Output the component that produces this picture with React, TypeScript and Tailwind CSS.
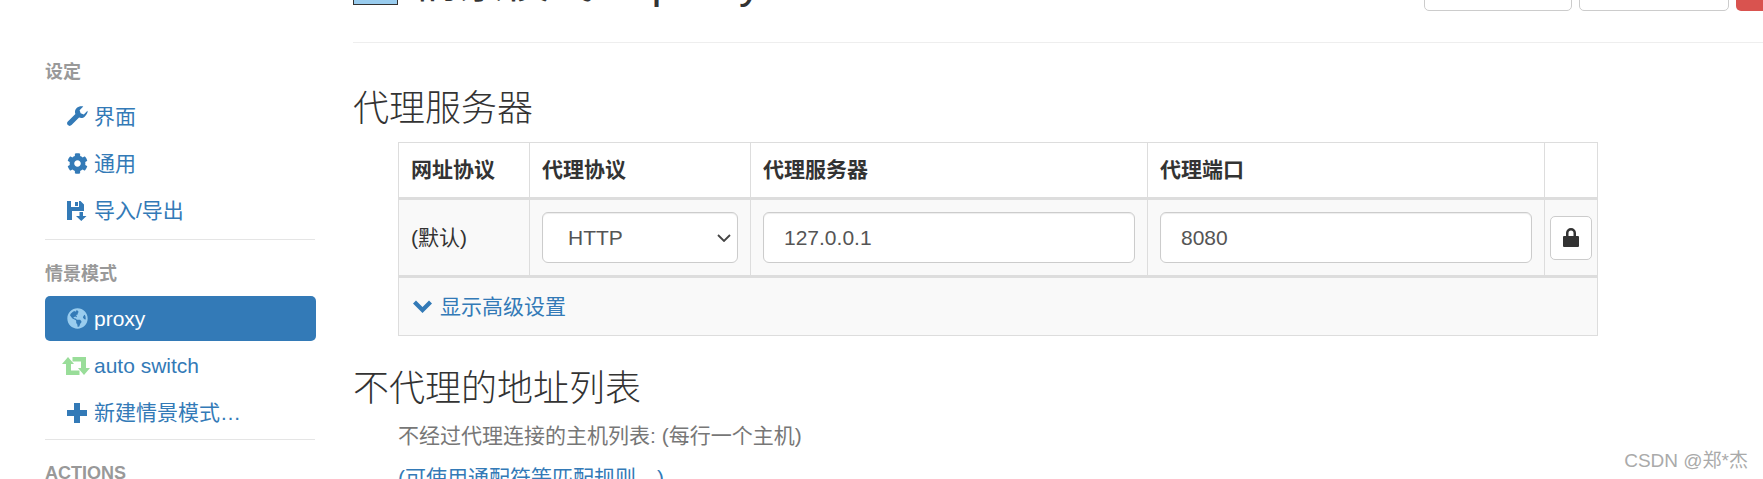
import { FaCog, FaGlobeAmericas } from "react-icons/fa";

const font = "font-['Liberation_Sans','Noto_Sans_CJK_SC',sans-serif]";

function Floppy() {
  return (
    <svg viewBox="0 0 20 20" className="w-[20px] h-[20px] fill-[#337ab7]">
      <path d="M0 0h4v6h8V0h1.500L17 3.500V10H5v9H0zM8 1h3v4H8z" fillRule="evenodd" />
      <path d="M12.500 11h3.500v4h3.500L14.250 20 9 15h3.500z" />
    </svg>
  );
}

function Wrench() {
  return (
    <svg viewBox="0 0 20 20" className="w-[21px] h-[21px] fill-[#337ab7]">
      <path d="M19.500 4.500L16 8l-3-1-1-3 3.500-3.500C13.500 0 10.800.4 9.200 2 7.600 3.600 7.200 5.800 8 7.500L.8 14.700c-1 1-1 2.500 0 3.500s2.500 1 3.500 0L11.500 11c1.700.8 4 .5 5.500-1 1.600-1.500 3-3.500 2.500-5.500z" />
    </svg>
  );
}

function Retweet() {
  return (
    <svg viewBox="0 0 28 20" className="w-[28px] h-[20px] fill-[#99dd99]">
      <path d="M6 1l6 7H9v6.500h8.500V19H4V8H0z" />
      <path d="M22 19l-6-7h3V5.500h-8.500V1H24v11h4z" />
    </svg>
  );
}

function Plus() {
  return (
    <svg viewBox="0 0 20 20" className="w-[20px] h-[20px] fill-[#337ab7]">
      <path d="M7 0h6v7h7v6h-7v7H7v-7H0V7h7z" />
    </svg>
  );
}

function Chevron() {
  return (
    <svg viewBox="0 0 19 13" className="w-[19px] h-[13px] mr-[8px] fill-[#337ab7]">
      <path d="M0 3.500L3 .5l6.500 6.500L16 .5l3 3L9.500 13z" />
    </svg>
  );
}

function Lock() {
  return (
    <svg viewBox="0 0 16 19" className="w-[16px] h-[19px] fill-[#333]">
      <path d="M3 8V5a5 5 0 0 1 10 0v3h2a1 1 0 0 1 1 1v9a1 1 0 0 1-1 1H1a1 1 0 0 1-1-1V9a1 1 0 0 1 1-1zm2.500 0h5V5a2.500 2.500 0 0 0-5 0z" fillRule="evenodd" />
    </svg>
  );
}

function NavItem({ icon, label, active }: { icon: React.ReactNode; label: string; active?: boolean }) {
  return (
    <div className={`h-[45px] mb-[2px] rounded-[5px] flex items-center pl-[22px] text-[21px] ${active ? "bg-[#337ab7] text-white" : "text-[#337ab7]"}`}>
      <span className="w-[27px] h-[24px] flex items-center">{icon}</span>
      <span>{label}</span>
    </div>
  );
}

const labelCls = "text-[18px] font-bold text-[#999] leading-[24px]";
const dividerCls = "h-px bg-[#e5e5e5] w-[270px]";
const cell = "border border-[#ddd] border-b-[3px] px-[12px]";
const inputCls = "w-full h-[51px] bg-white border border-[#ccc] rounded-[6px] flex items-center text-[21px] text-[#555] shadow-[inset_0_1px_1px_rgba(0,0,0,0.075)]";

export default function App() {
  return (
    <div className={`relative w-[1763px] h-[479px] overflow-hidden bg-white flex text-[#333] ${font}`}>
      <aside className="w-[353px] shrink-0 pl-[45px] pt-[60px]">
        <div className="w-[271px]">
          <div className={`${labelCls} mb-[10px]`}>设定</div>
          <NavItem icon={<Wrench />} label="界面" />
          <NavItem icon={<FaCog className="w-[21px] h-[21px] text-[#337ab7]" />} label="通用" />
          <NavItem icon={<Floppy />} label="导入/导出" />
          <div className={`${dividerCls} mt-[6px] mb-[22px]`} />
          <div className={`${labelCls} mb-[10px]`}>情景模式</div>
          <NavItem active icon={<FaGlobeAmericas className="w-[21px] h-[21px] text-[#99ccee]" />} label="proxy" />
          <NavItem icon={<span className="-ml-[5px]"><Retweet /></span>} label="auto switch" />
          <NavItem icon={<Plus />} label="新建情景模式…" />
          <div className={`${dividerCls} mt-[4px] mb-[21px]`} />
          <div className={labelCls}>ACTIONS</div>
        </div>
      </aside>
      <main className="flex-1 min-w-0 -mt-[34px]">
        <div className="h-[77px] border-b border-[#eee] flex justify-between items-start">
          <div className="flex items-start h-[39px]">
            <span className="w-[45px] h-[39px] bg-[#99ccee] border border-[#333] mr-[16px]" />
            <span className="text-[45px] leading-[34px] whitespace-nowrap">情景模式： proxy</span>
          </div>
          <div className="flex gap-[7px] items-start">
            <div className="w-[148px] h-[45px] bg-white border border-[#ccc] rounded-[5px]" />
            <div className="w-[150px] h-[45px] bg-white border border-[#ccc] rounded-[5px]" />
            <div className="w-[27px] h-[45px] bg-[#d9534f] rounded-l-[5px]" />
          </div>
        </div>
        <h3 className="text-[36px] leading-[40px] mt-[46px] font-light">代理服务器</h3>
        <div className="ml-[45px] w-[1200px] mt-[13px]">
          <table className="w-full table-fixed border-collapse text-[21px]">
            <colgroup>
              <col className="w-[131px]" />
              <col className="w-[221px]" />
              <col className="w-[397px]" />
              <col className="w-[397px]" />
              <col />
            </colgroup>
            <thead>
              <tr className="h-[56px] font-bold text-left">
                {["网址协议", "代理协议", "代理服务器", "代理端口", ""].map((h, i) => (
                  <th key={i} className={cell}>{h}</th>
                ))}
              </tr>
            </thead>
            <tbody>
              <tr className="bg-[#f9f9f9] h-[78px]">
                <td className={cell}>(默认)</td>
                <td className={cell}>
                  <div className={`${inputCls} justify-between pl-[25px] pr-[6px]`}>
                    <span>HTTP</span>
                    <svg viewBox="0 0 14 8" className="w-[14px] h-[8px] fill-none stroke-[#444] stroke-[1.800]"><path d="M1 1l6 6 6-6" /></svg>
                  </div>
                </td>
                <td className={cell}>
                  <div className={`${inputCls} pl-[20px]`}>127.0.0.1</div>
                </td>
                <td className={cell}>
                  <div className={`${inputCls} pl-[20px]`}>8080</div>
                </td>
                <td className="border border-[#ddd] border-b-[3px] px-[5px]">
                  <div className="w-[42px] h-[44px] bg-white border border-[#ccc] rounded-[5px] flex items-center justify-center">
                    <Lock />
                  </div>
                </td>
              </tr>
              <tr className="bg-[#f9f9f9] h-[59px]">
                <td colSpan={5} className="border border-[#ddd] px-[14px] text-[#337ab7]">
                  <div className="flex items-center">
                    <Chevron />
                    显示高级设置
                  </div>
                </td>
              </tr>
            </tbody>
          </table>
        </div>
        <h3 className="text-[36px] leading-[40px] mt-[33px] font-light">不代理的地址列表</h3>
        <p className="ml-[45px] mt-[12px] text-[21px] leading-[30px] text-[#777]">不经过代理连接的主机列表: (每行一个主机)</p>
        <p className="ml-[45px] mt-[12px] text-[21px] leading-[30px] text-[#337ab7]">(可使用通配符等匹配规则…)</p>
      </main>
      <div className="absolute right-[15px] bottom-[6px] text-[19px] leading-[24px] text-[#aaa]">CSDN @郑*杰</div>
    </div>
  );
}
